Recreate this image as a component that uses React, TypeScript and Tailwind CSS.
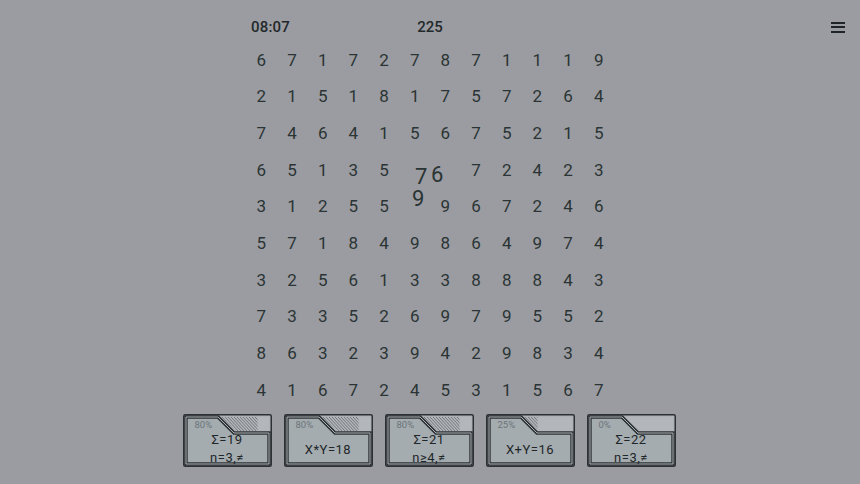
import React from "react";

const grid: (number | null)[][] = [
  [6, 7, 1, 7, 2, 7, 8, 7, 1, 1, 1, 9],
  [2, 1, 5, 1, 8, 1, 7, 5, 7, 2, 6, 4],
  [7, 4, 6, 4, 1, 5, 6, 7, 5, 2, 1, 5],
  [6, 5, 1, 3, 5, null, null, 7, 2, 4, 2, 3],
  [3, 1, 2, 5, 5, null, 9, 6, 7, 2, 4, 6],
  [5, 7, 1, 8, 4, 9, 8, 6, 4, 9, 7, 4],
  [3, 2, 5, 6, 1, 3, 3, 8, 8, 8, 4, 3],
  [7, 3, 3, 5, 2, 6, 9, 7, 9, 5, 5, 2],
  [8, 6, 3, 2, 3, 9, 4, 2, 9, 8, 3, 4],
  [4, 1, 6, 7, 2, 4, 5, 3, 1, 5, 6, 7],
];

type Card = { pct: number; lines: string[] };
const cards: Card[] = [
  { pct: 80, lines: ["Σ=19", "n=3,≠"] },
  { pct: 80, lines: ["X*Y=18"] },
  { pct: 80, lines: ["Σ=21", "n≥4,≠"] },
  { pct: 25, lines: ["X+Y=16"] },
  { pct: 0, lines: ["Σ=22", "n=3,≠"] },
];

function CardFrame({ pct, id }: { pct: number; id: string }) {
  const body = "M3,3 H35 L51,19 H86 V50 H3 Z";
  const slot = "M37,3 H86 V17 H53 Z";
  const hatchW = (pct / 100) * 42;
  const lines: React.ReactNode[] = [];
  for (let x = 30; x < 100; x += 3) {
    lines.push(<line key={x} x1={x} y1={3} x2={x + 14} y2={18} stroke="#5d6468" strokeWidth={0.8} />);
  }
  return (
    <svg className="absolute inset-0" width="89" height="53" viewBox="0 0 89 53">
      <defs>
        <clipPath id={`c-${id}`}>
          <rect x={37} y={3} width={hatchW + 4} height={14} />
        </clipPath>
        <clipPath id={`s-${id}`}>
          <path d={slot} />
        </clipPath>
      </defs>
      <rect x={0.75} y={0.75} width={87.5} height={51.5} rx={1.5} fill="#aeb2b6" stroke="#2c3134" strokeWidth={1.5} />
      <path d={slot} fill="#b3b6ba" />
      {pct > 0 && (
        <g clipPath={`url(#s-${id})`}>
          <g clipPath={`url(#c-${id})`}>{lines}</g>
        </g>
      )}
      <path d={body} fill="#a4acb0" stroke="#2c3134" strokeWidth={3.4} strokeLinejoin="miter" />
      <path d={body} fill="none" stroke="#b9bdc0" strokeWidth={0.9} strokeLinejoin="miter" />
    </svg>
  );
}

export default function App() {
  return (
    <div
      className="w-[860px] h-[484px] bg-[#9b9ca1] flex flex-col items-center overflow-hidden"
      style={{ fontFamily: "Roboto, 'Noto Sans', sans-serif" }}
    >
      <div className="w-[860px] h-[42px] flex items-center pt-[12px]">
        <div className="w-[246px] shrink-0" />
        <div className="w-[368px] shrink-0 flex items-center">
          <span className="w-[120px] pl-[5px] text-[15px] font-medium text-[#23292b] tracking-[0.2px]">08:07</span>
          <span className="w-[128px] text-center text-[15px] font-medium text-[#23292b]">225</span>
          <span className="w-[120px]" />
        </div>
        <div className="flex-1 flex justify-end pr-[15px]">
          <div className="flex flex-col gap-[2.5px] w-[14px]">
            <div className="h-[2px] bg-[#1f2426]" />
            <div className="h-[2px] bg-[#1f2426]" />
            <div className="h-[2px] bg-[#1f2426]" />
          </div>
        </div>
      </div>

      <div className="relative w-[368px] grid grid-cols-12 text-[#2a3434] text-[17px]">
        {grid.map((row, r) =>
          row.map((v, c) => (
            <div key={`${r}-${c}`} className="h-[36.7px] flex items-center justify-center">
              {v ?? ""}
            </div>
          ))
        )}
        <span className="absolute left-[169px] top-[126px] text-[22px] leading-[18px]">7</span>
        <span className="absolute left-[185px] top-[124px] text-[22px] leading-[18px]">6</span>
        <span className="absolute left-[166px] top-[148px] text-[22px] leading-[18px]">9</span>
      </div>

      <div className="mt-[5px] flex gap-[12px] -translate-x-[1px]">
        {cards.map((card, i) => (
          <div key={i} className="relative w-[89px] h-[53px]">
            <CardFrame pct={card.pct} id={String(i)} />
            <div className="relative flex flex-col h-full">
              <div className="h-[19px] pl-[12px] pt-[5px] text-[9.5px] leading-[12px] text-[#6c7478]">{card.pct}%</div>
              <div className="flex-1 flex flex-col items-center justify-center text-[13px] leading-[18px] text-[#1f2628] tracking-[0.5px]">
                {card.lines.map((l, j) => (
                  <div key={j}>{l}</div>
                ))}
              </div>
            </div>
          </div>
        ))}
      </div>
    </div>
  );
}
